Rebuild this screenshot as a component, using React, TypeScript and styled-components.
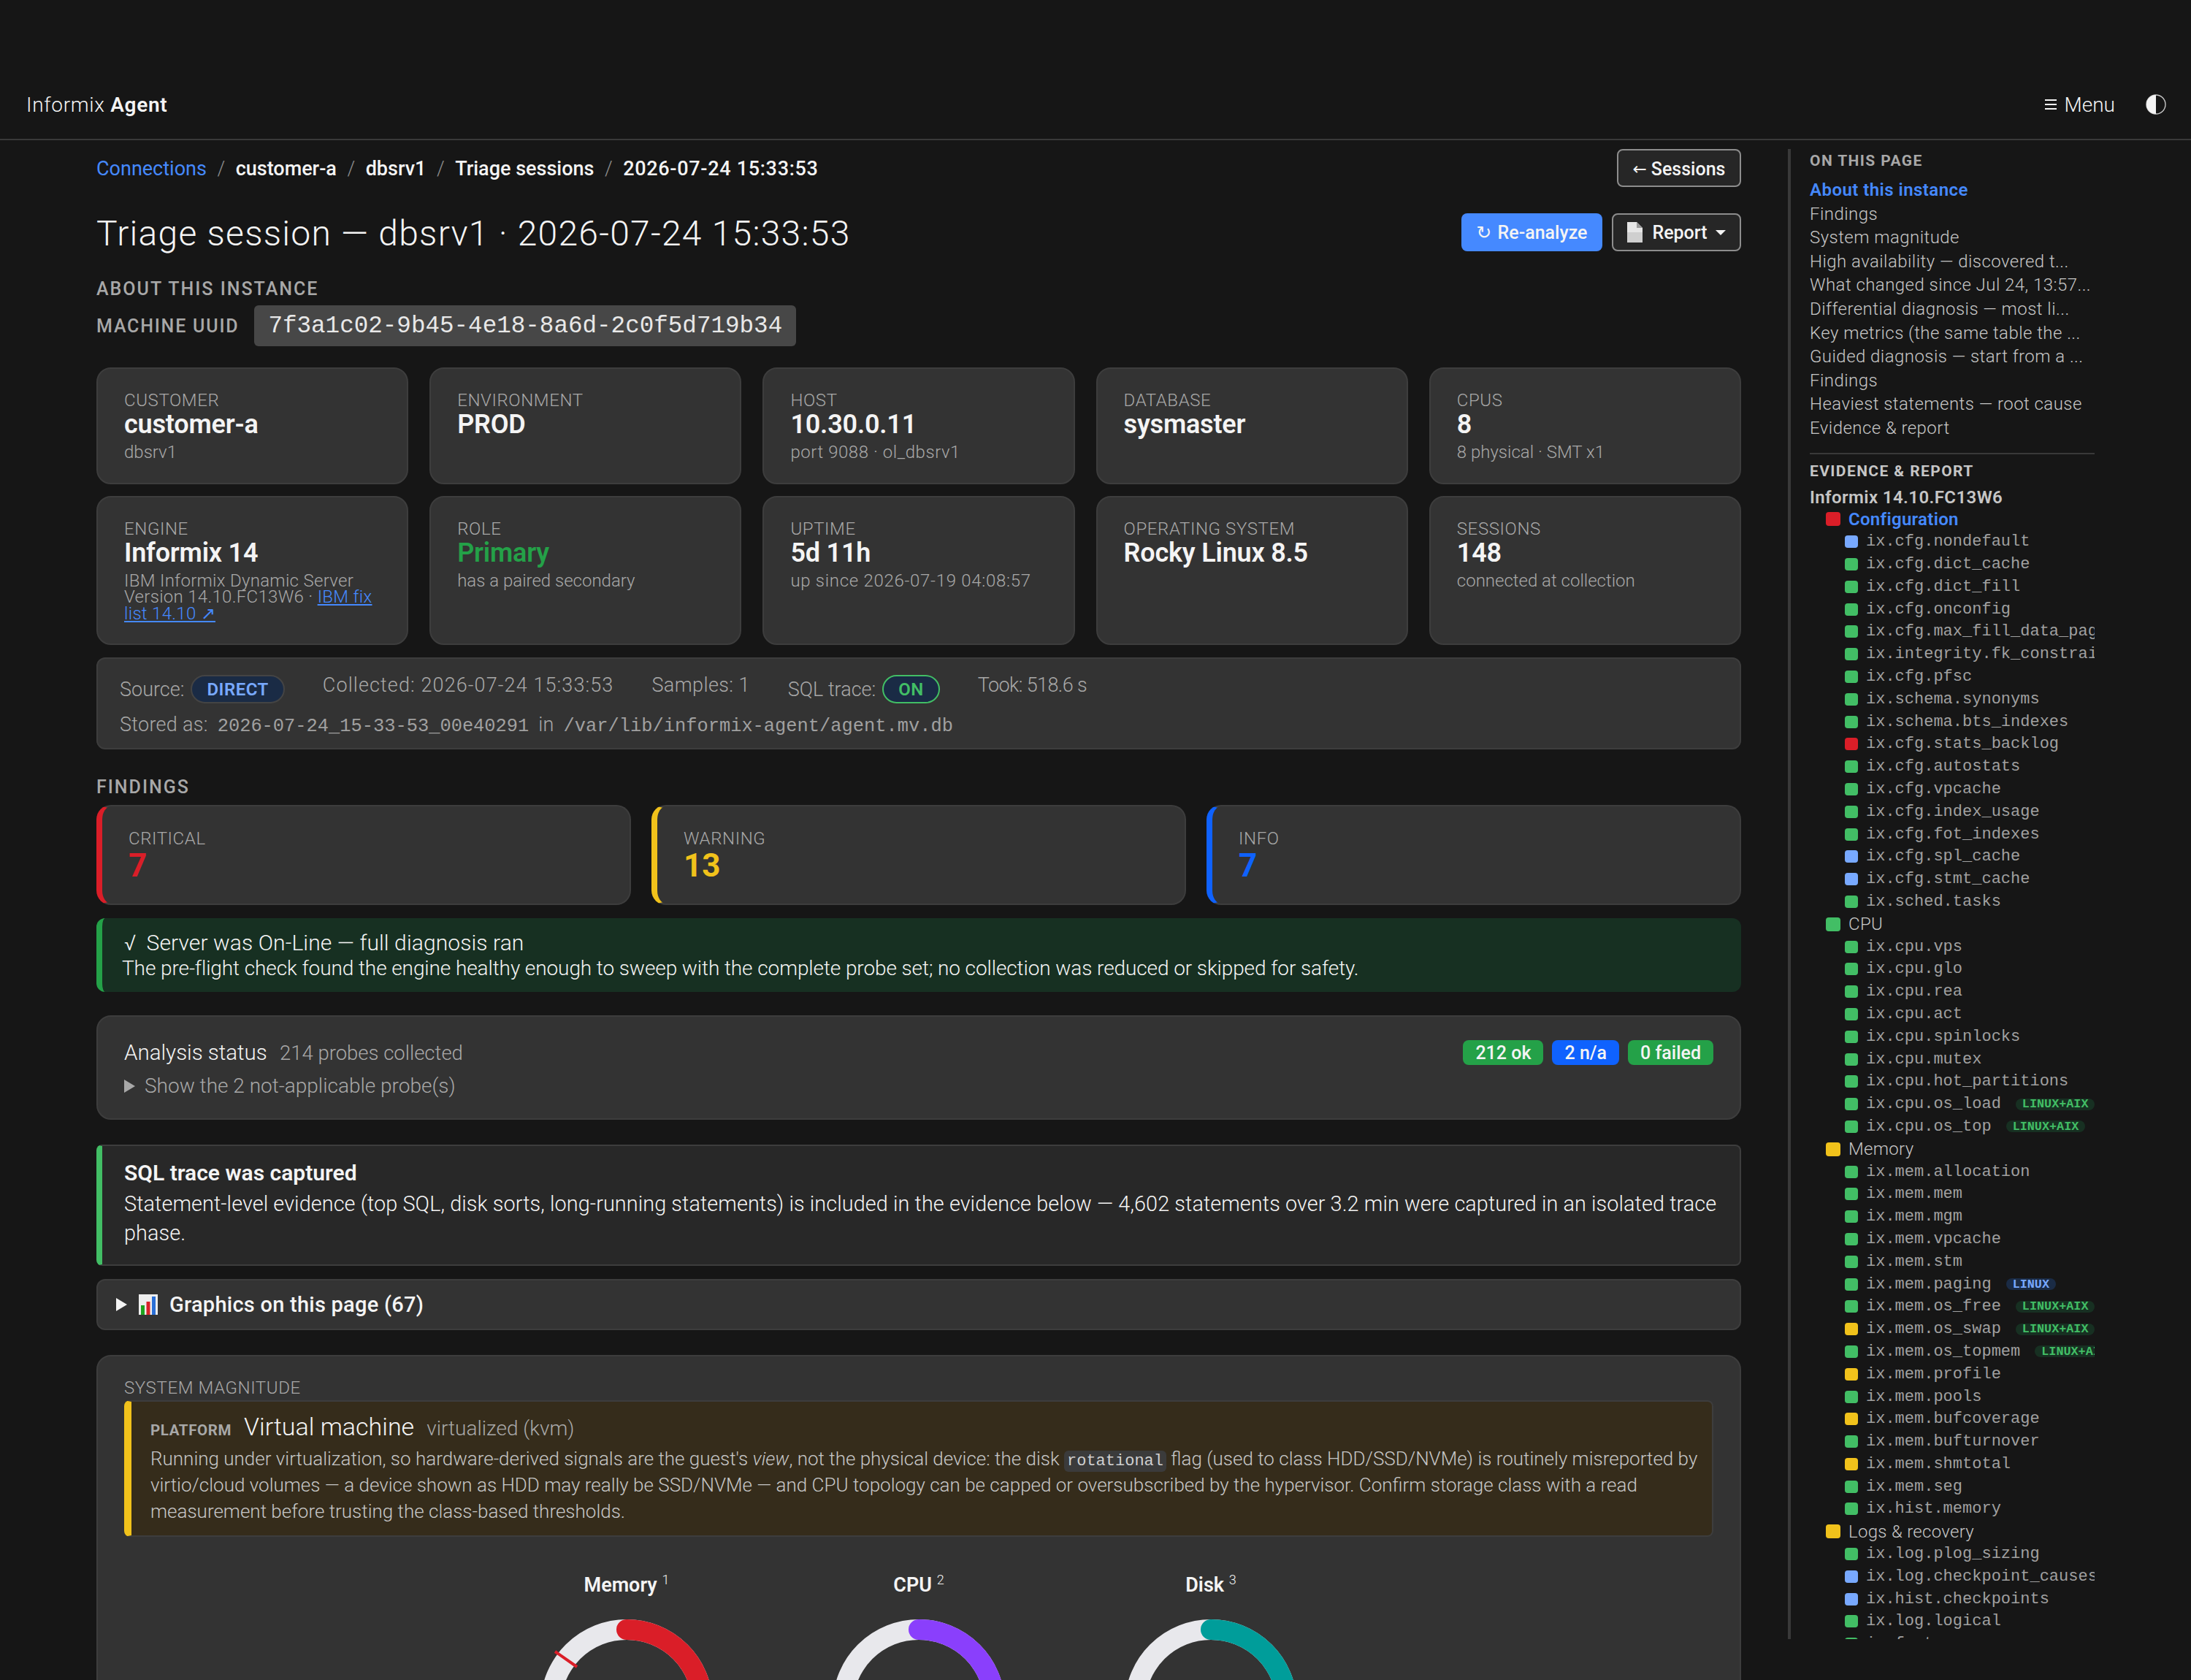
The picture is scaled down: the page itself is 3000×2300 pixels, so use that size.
import * as React from "react";
import styled, { createGlobalStyle } from "styled-components";

const SANS = `Roboto, "Noto Sans", sans-serif`;
const MONO = `"Liberation Mono", monospace`;

const GlobalStyle = createGlobalStyle`
  html, body {
    margin: 0;
    background: #161616;
    color: #f4f4f4;
    font-family: ${SANS};
  }
  * { box-sizing: border-box; }
`;

type Status = "g" | "y" | "r" | "b";

const statusColor: Record<Status, string> = {
  g: "#42be65",
  y: "#f1c21b",
  r: "#da1e28",
  b: "#78a9ff",
};

const tocItems = [
  "Findings",
  "System magnitude",
  "High availability — discovered t...",
  "What changed since Jul 24, 13:57...",
  "Differential diagnosis — most li...",
  "Key metrics (the same table the ...",
  "Guided diagnosis — start from a ...",
  "Findings",
  "Heaviest statements — root cause",
  "Evidence & report",
];

type Row = { name: string; s: Status; tag?: string; group?: boolean; active?: boolean };

const LA = "LINUX+AIX";

const tree: Row[] = [
  { name: "Configuration", s: "r", group: true, active: true },
  { name: "ix.cfg.nondefault", s: "b" },
  { name: "ix.cfg.dict_cache", s: "g" },
  { name: "ix.cfg.dict_fill", s: "g" },
  { name: "ix.cfg.onconfig", s: "g" },
  { name: "ix.cfg.max_fill_data_pages", s: "g" },
  { name: "ix.integrity.fk_constraints", s: "g" },
  { name: "ix.cfg.pfsc", s: "g" },
  { name: "ix.schema.synonyms", s: "g" },
  { name: "ix.schema.bts_indexes", s: "g" },
  { name: "ix.cfg.stats_backlog", s: "r" },
  { name: "ix.cfg.autostats", s: "g" },
  { name: "ix.cfg.vpcache", s: "g" },
  { name: "ix.cfg.index_usage", s: "g" },
  { name: "ix.cfg.fot_indexes", s: "g" },
  { name: "ix.cfg.spl_cache", s: "b" },
  { name: "ix.cfg.stmt_cache", s: "b" },
  { name: "ix.sched.tasks", s: "g" },
  { name: "CPU", s: "g", group: true },
  { name: "ix.cpu.vps", s: "g" },
  { name: "ix.cpu.glo", s: "g" },
  { name: "ix.cpu.rea", s: "g" },
  { name: "ix.cpu.act", s: "g" },
  { name: "ix.cpu.spinlocks", s: "g" },
  { name: "ix.cpu.mutex", s: "g" },
  { name: "ix.cpu.hot_partitions", s: "g" },
  { name: "ix.cpu.os_load", s: "g", tag: LA },
  { name: "ix.cpu.os_top", s: "g", tag: LA },
  { name: "Memory", s: "y", group: true },
  { name: "ix.mem.allocation", s: "g" },
  { name: "ix.mem.mem", s: "g" },
  { name: "ix.mem.mgm", s: "g" },
  { name: "ix.mem.vpcache", s: "g" },
  { name: "ix.mem.stm", s: "g" },
  { name: "ix.mem.paging", s: "g", tag: "LINUX" },
  { name: "ix.mem.os_free", s: "g", tag: LA },
  { name: "ix.mem.os_swap", s: "y", tag: LA },
  { name: "ix.mem.os_topmem", s: "g", tag: LA },
  { name: "ix.mem.profile", s: "y" },
  { name: "ix.mem.pools", s: "g" },
  { name: "ix.mem.bufcoverage", s: "y" },
  { name: "ix.mem.bufturnover", s: "g" },
  { name: "ix.mem.shmtotal", s: "y" },
  { name: "ix.mem.seg", s: "g" },
  { name: "ix.hist.memory", s: "g" },
  { name: "Logs & recovery", s: "y", group: true },
  { name: "ix.log.plog_sizing", s: "g" },
  { name: "ix.log.checkpoint_causes", s: "b" },
  { name: "ix.hist.checkpoints", s: "b" },
  { name: "ix.log.logical", s: "g" },
  { name: "ix.fast_recovery", s: "g" },
];

const topCards = [
  { label: "Customer", value: "customer-a", sub: "dbsrv1" },
  { label: "Environment", value: "PROD" },
  { label: "Host", value: "10.30.0.11", sub: "port 9088 · ol_dbsrv1", spacing: 0.55 },
  { label: "Database", value: "sysmaster" },
  { label: "CPUs", value: "8", sub: "8 physical · SMT x1" },
];

const gauges = [
  { title: "Memory", note: "1", color: "#da1e28", pct: 62, tick: true },
  { title: "CPU", note: "2", color: "#8a3ffc", pct: 45, tick: false },
  { title: "Disk", note: "3", color: "#009d9a", pct: 40, tick: false },
];

const Gauge: React.FC<{ color: string; pct: number; tick: boolean }> = ({ color, pct, tick }) => (
  <svg width="236" height="236" viewBox="0 0 236 236">
    <circle cx="118" cy="118" r="104" fill="none" stroke="#e8e8ec" strokeWidth="28" />
    <circle
      cx="118"
      cy="118"
      r="104"
      fill="none"
      stroke={color}
      strokeWidth="28"
      strokeLinecap="round"
      pathLength={100}
      strokeDasharray={`${pct} 100`}
      transform="rotate(-90 118 118)"
    />
    {tick && <line x1="20" y1="44" x2="50" y2="65" stroke="#da1e28" strokeWidth="4" />}
  </svg>
);

export default function App() {
  return (
    <Page>
      <GlobalStyle />
      <TopBar>
        <Brand>
          Informix <b>Agent</b>
        </Brand>
        <TopActions>
          <MenuButton>
            <svg width="16" height="14" viewBox="0 0 16 14">
              <rect y="0" width="16" height="2" fill="#f4f4f4" />
              <rect y="6" width="16" height="2" fill="#f4f4f4" />
              <rect y="12" width="16" height="2" fill="#f4f4f4" />
            </svg>
            Menu
          </MenuButton>
          <svg width="28" height="28" viewBox="0 0 28 28">
            <circle cx="14" cy="14" r="13" fill="none" stroke="#c6c6c6" strokeWidth="1.4" />
            <path d="M14 1a13 13 0 0 0 0 26z" fill="#f4f4f4" />
          </svg>
        </TopActions>
      </TopBar>

      <Layout>
        <Main>
          <CrumbRow>
            <Crumbs>
              <CrumbLink>Connections</CrumbLink>
              <CrumbSep>/</CrumbSep>
              <span>customer-a</span>
              <CrumbSep>/</CrumbSep>
              <span>dbsrv1</span>
              <CrumbSep>/</CrumbSep>
              <span>Triage sessions</span>
              <CrumbSep>/</CrumbSep>
              <CrumbDate>2026-07-24 15:33:53</CrumbDate>
            </Crumbs>
            <SessionsButton>
              <ArrowGlyph>←</ArrowGlyph>
              Sessions
            </SessionsButton>
          </CrumbRow>

          <TitleRow>
            <Title>Triage session — dbsrv1 · 2026-07-24 15:33:53</Title>
            <TitleActions>
              <PrimaryButton>
                <Glyph>↻</Glyph> Re-analyze
              </PrimaryButton>
              <ReportButton>
                <svg width="21" height="28" viewBox="0 0 21 28">
                  <path d="M0 0h13l8 8v20H0z" fill="#e6e6e6" />
                  <path d="M13 0l8 8h-8z" fill="#9a9a9a" />
                  <rect y="14" width="21" height="14" fill="#cfcfcf" />
                </svg>
                <ReportLabel>Report</ReportLabel>
                <Caret />
              </ReportButton>
            </TitleActions>
          </TitleRow>

          <SectionLabel>About this instance</SectionLabel>
          <UuidRow>
            <UuidLabel>Machine UUID</UuidLabel>
            <UuidChip>7f3a1c02-9b45-4e18-8a6d-2c0f5d719b34</UuidChip>
          </UuidRow>

          <InfoGrid>
            {topCards.map((c) => (
              <InfoCard key={c.label}>
                <InfoLabel>{c.label}</InfoLabel>
                <InfoValue>{c.value}</InfoValue>
                {c.sub && <InfoSub $spacing={c.spacing}>{c.sub}</InfoSub>}
              </InfoCard>
            ))}
            <InfoCard>
              <InfoLabel>Engine</InfoLabel>
              <InfoValue>Informix 14</InfoValue>
              <InfoSub $spacing={0.3}>
                IBM Informix Dynamic Server Version 14.10.FC13W6 · <SubLink>IBM fix list 14.10 ↗</SubLink>
              </InfoSub>
            </InfoCard>
            <InfoCard>
              <InfoLabel>Role</InfoLabel>
              <InfoValue $color="#24a148">Primary</InfoValue>
              <InfoSub>has a paired secondary</InfoSub>
            </InfoCard>
            <InfoCard>
              <InfoLabel>Uptime</InfoLabel>
              <InfoValue>5d 11h</InfoValue>
              <InfoSub $spacing={0.7}>up since 2026-07-19 04:08:57</InfoSub>
            </InfoCard>
            <InfoCard>
              <InfoLabel>Operating system</InfoLabel>
              <InfoValue>Rocky Linux 8.5</InfoValue>
            </InfoCard>
            <InfoCard>
              <InfoLabel>Sessions</InfoLabel>
              <InfoValue>148</InfoValue>
              <InfoSub>connected at collection</InfoSub>
            </InfoCard>
          </InfoGrid>

          <MetaBar>
            <MetaRow>
              <MetaPillGroup>
                Source: <Pill $color="#78a9ff" $border="#444444">DIRECT</Pill>
              </MetaPillGroup>
              <MetaText $spacing={1.1}>Collected: 2026-07-24 15:33:53</MetaText>
              <MetaText $spacing={0.4}>Samples: 1</MetaText>
              <MetaPillGroup>
                SQL trace: <Pill $color="#42be65" $border="#42be65">ON</Pill>
              </MetaPillGroup>
              <MetaText $spacing={-0.6}>Took: 518.6 s</MetaText>
            </MetaRow>
            <StoredRow>
              Stored as: <StoredMono>2026-07-24_15-33-53_00e40291</StoredMono> in{" "}
              <StoredMono>/var/lib/informix-agent/agent.mv.db</StoredMono>
            </StoredRow>
          </MetaBar>

          <FindingsLabel>Findings</FindingsLabel>
          <FindingsGrid>
            <FindingCard $accent="#da1e28">
              <InfoLabel>Critical</InfoLabel>
              <FindingValue $color="#da1e28">7</FindingValue>
            </FindingCard>
            <FindingCard $accent="#f1c21b">
              <InfoLabel>Warning</InfoLabel>
              <FindingValue $color="#f1c21b">13</FindingValue>
            </FindingCard>
            <FindingCard $accent="#0f62fe">
              <InfoLabel>Info</InfoLabel>
              <FindingValue $color="#0f62fe">7</FindingValue>
            </FindingCard>
          </FindingsGrid>

          <HealthBanner>
            <HealthTitle>
              <HealthMark>√</HealthMark>Server was On-Line — full diagnosis ran
            </HealthTitle>
            <HealthText>
              The pre-flight check found the engine healthy enough to sweep with the complete probe set; no collection
              was reduced or skipped for safety.
            </HealthText>
          </HealthBanner>

          <StatusCard>
            <StatusHead>
              <StatusTitle>
                Analysis status <StatusCount>214 probes collected</StatusCount>
              </StatusTitle>
              <Badges>
                <Badge $bg="#24a148">212 ok</Badge>
                <Badge $bg="#0f62fe">2 n/a</Badge>
                <Badge $bg="#24a148">0 failed</Badge>
              </Badges>
            </StatusHead>
            <Disclosure>
              <Triangle $color="#a8a8a8" />
              Show the 2 not-applicable probe(s)
            </Disclosure>
          </StatusCard>

          <TraceCard>
            <TraceTitle>SQL trace was captured</TraceTitle>
            <TraceText>
              Statement-level evidence (top SQL, disk sorts, long-running statements) is included in the evidence below —
              4,602 statements over 3.2 min were captured in an isolated trace phase.
            </TraceText>
          </TraceCard>

          <GraphicsBar>
            <Triangle $color="#f4f4f4" />
            <svg width="26" height="28" viewBox="0 0 26 28">
              <rect width="26" height="28" fill="#eeeeee" />
              <rect x="3" y="15" width="5" height="13" fill="#1fa31f" />
              <rect x="10.5" y="10" width="5" height="18" fill="#d8232a" />
              <rect x="18" y="3" width="5" height="25" fill="#2a6fd6" />
            </svg>
            Graphics on this page (67)
          </GraphicsBar>

          <MagnitudeCard>
            <InfoLabel>System magnitude</InfoLabel>
            <PlatformBox>
              <PlatformHead>
                <PlatformLabel>Platform</PlatformLabel>
                <PlatformName>Virtual machine</PlatformName>
                <PlatformKind>virtualized (kvm)</PlatformKind>
              </PlatformHead>
              <PlatformText>
                Running under virtualization, so hardware-derived signals are the guest's <em>view</em>, not the physical
                device: the disk <InlineCode>rotational</InlineCode> flag (used to class HDD/SSD/NVMe) is routinely
                misreported by virtio/cloud volumes — a device shown as HDD may really be SSD/NVMe — and CPU topology can
                be capped or oversubscribed by the hypervisor. Confirm storage class with a read measurement before
                trusting the class-based thresholds.
              </PlatformText>
            </PlatformBox>
            <GaugeRow>
              {gauges.map((g) => (
                <GaugeCol key={g.title}>
                  <GaugeTitle>
                    {g.title} <GaugeNote>{g.note}</GaugeNote>
                  </GaugeTitle>
                  <Gauge color={g.color} pct={g.pct} tick={g.tick} />
                </GaugeCol>
              ))}
            </GaugeRow>
          </MagnitudeCard>
        </Main>

        <Sidebar>
          <SideHeading>On this page</SideHeading>
          <TocList>
            <TocItem $active>About this instance</TocItem>
            {tocItems.map((t, i) => (
              <TocItem key={i}>{t}</TocItem>
            ))}
          </TocList>
          <SideDivider />
          <SideHeadingLight>Evidence &amp; report</SideHeadingLight>
          <TreeRoot>Informix 14.10.FC13W6</TreeRoot>
          {tree.map((r) =>
            r.group ? (
              <GroupRow key={r.name} $active={r.active}>
                <GroupDot $color={statusColor[r.s]} />
                {r.name}
              </GroupRow>
            ) : (
              <ProbeRow key={r.name}>
                <ProbeDot $color={statusColor[r.s]} />
                {r.name}
                {r.tag && <OsTag $linux={r.tag === "LINUX"}>{r.tag}</OsTag>}
              </ProbeRow>
            ),
          )}
        </Sidebar>
      </Layout>
    </Page>
  );
}

const Page = styled.div`
  width: 3000px;
  height: 2300px;
  overflow: hidden;
`;

const TopBar = styled.header`
  height: 192px;
  padding: 96px 34px 0 36px;
  display: flex;
  justify-content: space-between;
  align-items: center;
  border-bottom: 2px solid #393939;
`;

const Brand = styled.div`
  font-size: 28px;
  font-weight: 300;
  letter-spacing: 0.7px;
  b {
    font-weight: 600;
  }
`;

const TopActions = styled.div`
  display: flex;
  align-items: center;
  gap: 42px;
`;

const MenuButton = styled.div`
  display: flex;
  align-items: center;
  gap: 11px;
  font-size: 28px;
  font-weight: 300;
`;

const Layout = styled.div`
  display: flex;
  padding: 12px 0 0 132px;
`;

const Main = styled.main`
  width: 2252px;
  flex: none;
`;

const CrumbRow = styled.div`
  display: flex;
  justify-content: space-between;
  align-items: center;
`;

const Crumbs = styled.nav`
  padding-top: 2px;
  display: flex;
  align-items: center;
  gap: 14.5px;
  font-size: 27px;
  font-weight: 500;
`;

const CrumbLink = styled.span`
  color: #4589ff;
  font-weight: 400;
`;

const CrumbSep = styled.span`
  color: #8d8d8d;
  font-weight: 300;
`;

const CrumbDate = styled.span`
  letter-spacing: 0.7px;
`;

const GhostButton = styled.div`
  height: 52px;
  display: flex;
  align-items: center;
  border: 2px solid #8d8d8d;
  border-radius: 8px;
  background: #262626;
  font-size: 25px;
  font-weight: 500;
`;

const SessionsButton = styled(GhostButton)`
  width: 170px;
  padding-top: 2px;
  justify-content: center;
  gap: 6px;
`;

const ReportButton = styled(GhostButton)`
  width: 177px;
  justify-content: center;
  gap: 11px;
`;

const PrimaryButton = styled.div`
  width: 193px;
  height: 52px;
  display: flex;
  align-items: center;
  justify-content: center;
  gap: 8px;
  border-radius: 8px;
  background: #4589ff;
  font-size: 25px;
  font-weight: 500;
`;

const Glyph = styled.span`
  font-family: "DejaVu Sans", sans-serif;
`;

const ArrowGlyph = styled(Glyph)`
  font-size: 23px;
`;

const ReportLabel = styled.span`
  margin-left: 2px;
`;

const Caret = styled.span`
  width: 0;
  height: 0;
  border-left: 7px solid transparent;
  border-right: 7px solid transparent;
  border-top: 7px solid #f4f4f4;
`;

const TitleRow = styled.div`
  margin-top: 36px;
  height: 52px;
  display: flex;
  justify-content: space-between;
  align-items: flex-start;
`;

const Title = styled.h1`
  margin: 0;
  font-size: 48px;
  line-height: 56px;
  font-weight: 300;
  letter-spacing: 1.25px;
`;

const TitleActions = styled.div`
  display: flex;
  gap: 13px;
`;

const SectionLabel = styled.h2`
  margin: 36px 0 0;
  font-size: 25px;
  line-height: 32px;
  font-weight: 500;
  color: #a8a8a8;
  text-transform: uppercase;
  letter-spacing: 2px;
`;

const FindingsLabel = styled(SectionLabel)`
  margin-top: 36px;
`;

const UuidRow = styled.div`
  margin-top: 6px;
  display: flex;
  align-items: center;
  gap: 21px;
`;

const UuidLabel = styled.span`
  font-size: 25px;
  font-weight: 500;
  color: #a8a8a8;
  text-transform: uppercase;
  letter-spacing: 1.8px;
`;

const UuidChip = styled.code`
  height: 56px;
  padding: 0 19px;
  display: flex;
  align-items: center;
  background: #474747;
  border-radius: 6px;
  font-family: ${MONO};
  font-size: 32.6px;
  color: #e8e8e8;
`;

const Card = styled.div`
  background: #333333;
  border: 2px solid #3d3d3d;
  border-radius: 20px;
`;

const InfoGrid = styled.div`
  margin-top: 29px;
  display: grid;
  grid-template-columns: repeat(5, 1fr);
  gap: 16px 29px;
`;

const InfoCard = styled(Card)`
  padding: 28px 36px 30px;
`;

const InfoLabel = styled.div`
  font-size: 24px;
  line-height: 30px;
  font-weight: 300;
  color: #a8a8a8;
  text-transform: uppercase;
  letter-spacing: 0.6px;
`;

const InfoValue = styled.div<{ $color?: string }>`
  font-size: 36px;
  line-height: 36px;
  font-weight: 600;
  letter-spacing: -0.2px;
  color: ${(p) => p.$color ?? "#f4f4f4"};
`;

const InfoSub = styled.div<{ $spacing?: number }>`
  margin-top: 9px;
  font-size: 24px;
  line-height: 22.6px;
  font-weight: 300;
  letter-spacing: ${(p) => p.$spacing ?? 0}px;
  color: #a8a8a8;
`;

const SubLink = styled.span`
  color: #4589ff;
  text-decoration: underline;
`;

const MetaBar = styled.div`
  margin-top: 17px;
  height: 126px;
  padding: 22px 30px 0;
  background: #333333;
  border: 2px solid #3d3d3d;
  border-radius: 12px;
`;

const MetaRow = styled.div`
  display: flex;
  align-items: flex-start;
  gap: 52px;
`;

const MetaText = styled.span<{ $spacing?: number }>`
  font-size: 27px;
  line-height: 28px;
  font-weight: 300;
  letter-spacing: ${(p) => p.$spacing ?? 0}px;
  color: #a8a8a8;
`;

const MetaPillGroup = styled.span`
  display: inline-flex;
  align-items: center;
  gap: 9px;
  font-size: 27px;
  font-weight: 300;
  color: #a8a8a8;
`;

const Pill = styled.span<{ $color: string; $border: string }>`
  height: 39px;
  padding: 0 20px;
  display: inline-flex;
  align-items: center;
  border-radius: 20px;
  border: 2px solid ${(p) => p.$border};
  background: #1a2b45;
  color: ${(p) => p.$color};
  font-size: 24px;
  font-weight: 600;
  letter-spacing: 0.5px;
`;

const StoredRow = styled.div`
  margin-top: 12px;
  font-size: 27px;
  line-height: 34px;
  font-weight: 300;
  letter-spacing: 0.3px;
  color: #a8a8a8;
`;

const StoredMono = styled.span`
  font-family: ${MONO};
  font-size: 25.4px;
  letter-spacing: 0;
  margin: 0 6px;
  color: #a0a0a0;
`;

const FindingsGrid = styled.div`
  margin-top: 8px;
  display: grid;
  grid-template-columns: repeat(3, 1fr);
  gap: 28px;
`;

const FindingCard = styled(Card)<{ $accent: string }>`
  height: 137px;
  padding: 29px 36px 0;
  border-left: 8px solid ${(p) => p.$accent};
`;

const FindingValue = styled.div<{ $color: string }>`
  font-size: 44px;
  line-height: 44px;
  font-weight: 700;
  color: ${(p) => p.$color};
`;

const HealthBanner = styled.div`
  margin-top: 18px;
  height: 101px;
  padding: 17px 30px 0;
  background: #173022;
  border-left: 8px solid #24a148;
  border-radius: 12px;
`;

const HealthTitle = styled.div`
  font-size: 30px;
  line-height: 34px;
  font-weight: 300;
  letter-spacing: 0.1px;
`;

const HealthMark = styled.span`
  margin-right: 14px;
`;

const HealthText = styled.div`
  font-size: 28px;
  line-height: 36px;
  font-weight: 300;
  letter-spacing: -0.1px;
  margin-left: -3px;
`;

const StatusCard = styled(Card)`
  margin-top: 32px;
  height: 143px;
  padding: 32px 36px 0;
`;

const StatusHead = styled.div`
  display: flex;
  justify-content: space-between;
  align-items: center;
`;

const StatusTitle = styled.div`
  font-size: 29.5px;
  font-weight: 300;
`;

const StatusCount = styled.span`
  margin-left: 10px;
  font-size: 27.5px;
  color: #a8a8a8;
`;

const Badges = styled.div`
  display: flex;
  gap: 12px;
`;

const Badge = styled.span<{ $bg: string }>`
  height: 34px;
  padding: 0 17px;
  display: inline-flex;
  align-items: center;
  background: ${(p) => p.$bg};
  border-radius: 8px;
  font-size: 25px;
  font-weight: 500;
`;

const Disclosure = styled.div`
  margin-top: 12px;
  display: flex;
  align-items: center;
  gap: 13px;
  font-size: 28px;
  line-height: 34px;
  font-weight: 300;
  color: #a8a8a8;
`;

const Triangle = styled.span<{ $color: string }>`
  width: 0;
  height: 0;
  border-top: 9px solid transparent;
  border-bottom: 9px solid transparent;
  border-left: 15px solid ${(p) => p.$color};
`;

const TraceCard = styled.div`
  margin-top: 34px;
  height: 166px;
  padding: 20px 30px 0;
  background: #282828;
  border: 2px solid #3d3d3d;
  border-left: 8px solid #42be65;
  border-radius: 8px;
`;

const TraceTitle = styled.div`
  font-size: 30px;
  line-height: 34px;
  font-weight: 600;
`;

const TraceText = styled.div`
  margin-top: 5px;
  font-size: 28.8px;
  line-height: 40px;
  font-weight: 300;
  letter-spacing: 0.09px;
`;

const GraphicsBar = styled(Card)`
  margin-top: 18px;
  height: 70px;
  padding-left: 25px;
  display: flex;
  align-items: center;
  gap: 16px;
  border-radius: 12px;
  font-size: 29px;
  font-weight: 500;
  letter-spacing: 0.25px;
`;

const MagnitudeCard = styled(Card)`
  margin-top: 34px;
  height: 600px;
  padding: 28px 36px 0;
`;

const PlatformBox = styled.div`
  margin-top: 2px;
  height: 187px;
  padding: 14px 10px 0 26px;
  background: #352c1b;
  border: 2px solid #3d3d3d;
  border-left: 10px solid #f1c21b;
  border-radius: 8px;
`;

const PlatformHead = styled.div`
  height: 40px;
  display: flex;
  align-items: baseline;
  gap: 17px;
  line-height: 40px;
`;

const PlatformLabel = styled.span`
  font-size: 20.5px;
  font-weight: 700;
  color: #a8a8a8;
  text-transform: uppercase;
  letter-spacing: 0.6px;
`;

const PlatformName = styled.span`
  font-size: 34px;
  font-weight: 300;
`;

const PlatformKind = styled.span`
  font-size: 28px;
  font-weight: 300;
  color: #a8a8a8;
`;

const PlatformText = styled.div`
  margin-top: 6px;
  font-size: 26px;
  line-height: 36px;
  font-weight: 300;
  color: #c6c6c6;
`;

const InlineCode = styled.code`
  padding: 2px 4px;
  background: #3b3b3b;
  border-radius: 6px;
  font-family: ${MONO};
  font-size: 22px;
  line-height: 1;
  color: #d0d0d0;
`;

const GaugeRow = styled.div`
  margin-top: 49px;
  display: flex;
  justify-content: center;
  gap: 164px;
`;

const GaugeCol = styled.div`
  width: 236px;
  display: flex;
  flex-direction: column;
  align-items: center;
  gap: 30px;
`;

const GaugeTitle = styled.div`
  font-size: 27px;
  line-height: 34px;
  font-weight: 600;
  white-space: nowrap;
`;

const GaugeNote = styled.sup`
  font-size: 18px;
  font-weight: 300;
  line-height: 0;
`;

const Sidebar = styled.aside`
  margin-left: 64px;
  width: 420px;
  height: 2040px;
  padding: 4px 0 0 26px;
  flex: none;
  overflow: hidden;
  border-left: 4px solid #393939;
`;

const SideHeading = styled.div`
  font-size: 21px;
  line-height: 24px;
  font-weight: 700;
  color: #a8a8a8;
  text-transform: uppercase;
  letter-spacing: 1.4px;
`;

const SideHeadingLight = styled(SideHeading)`
  margin-top: 11px;
  color: #c6c6c6;
`;

const TocList = styled.div`
  margin-top: 12px;
`;

const TocItem = styled.div<{ $active?: boolean }>`
  height: 32.6px;
  line-height: 32.6px;
  font-size: 24px;
  font-weight: ${(p) => (p.$active ? 600 : 300)};
  letter-spacing: 0.45px;
  color: ${(p) => (p.$active ? "#4589ff" : "#c6c6c6")};
  white-space: nowrap;
`;

const SideDivider = styled.div`
  margin-top: 17px;
  width: 390px;
  height: 2px;
  background: #393939;
`;

const TreeRoot = styled.div`
  margin-top: 9px;
  font-size: 24px;
  line-height: 30px;
  font-weight: 600;
  letter-spacing: 0.4px;
  color: #c6c6c6;
`;

const GroupRow = styled.div<{ $active?: boolean }>`
  width: 390px;
  height: 30.8px;
  padding-left: 22px;
  display: flex;
  align-items: center;
  gap: 11px;
  font-size: 24px;
  font-weight: ${(p) => (p.$active ? 600 : 300)};
  letter-spacing: 0.3px;
  color: ${(p) => (p.$active ? "#4589ff" : "#c6c6c6")};
`;

const GroupDot = styled.span<{ $color: string }>`
  flex: none;
  width: 20px;
  height: 19px;
  border-radius: 4px;
  background: ${(p) => p.$color};
`;

const ProbeRow = styled.div`
  width: 390px;
  height: 30.8px;
  padding-left: 48px;
  display: flex;
  align-items: center;
  gap: 11px;
  overflow: hidden;
  white-space: nowrap;
  font-family: ${MONO};
  font-size: 22px;
  color: #a0a0a0;
`;

const ProbeDot = styled.span<{ $color: string }>`
  flex: none;
  width: 18px;
  height: 17px;
  border-radius: 4px;
  background: ${(p) => p.$color};
`;

const OsTag = styled.span<{ $linux: boolean }>`
  flex: none;
  margin-left: 9px;
  height: 16px;
  padding: 0 9px;
  display: inline-flex;
  align-items: center;
  border-radius: 8px;
  background: ${(p) => (p.$linux ? "#1a2b45" : "#173022")};
  color: ${(p) => (p.$linux ? "#78a9ff" : "#42be65")};
  font-size: 16.8px;
  font-weight: 700;
`;
